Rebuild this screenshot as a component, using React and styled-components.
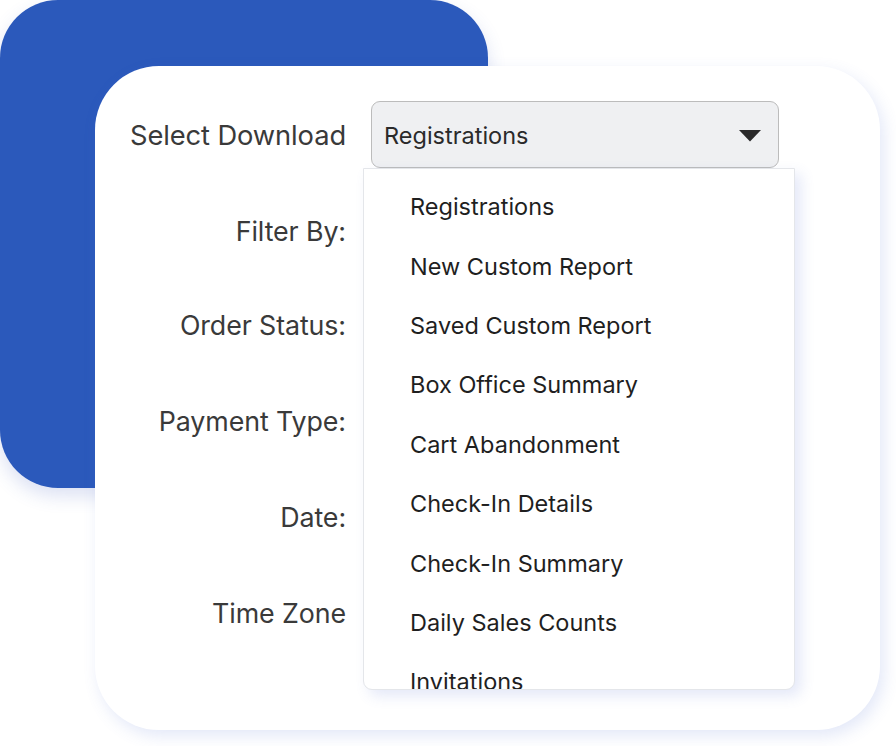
import React from "react";
import styled, { createGlobalStyle } from "styled-components";

const Global = createGlobalStyle`
  html, body { margin: 0; padding: 0; background: #ffffff; }
  body { font-family: "Inter", "Open Sans", sans-serif; }
  * { box-sizing: border-box; }
`;

const Stage = styled.div`
  display: grid;
  grid-template-areas: "stack";
  width: 896px;
  height: 746px;
  overflow: hidden;
`;

const BlueBlock = styled.div`
  grid-area: stack;
  width: 488px;
  height: 488px;
  background: #2b59bb;
  border-radius: 58px;
  box-shadow: 0 8px 18px rgba(60, 90, 190, 0.18);
`;

const Card = styled.div`
  grid-area: stack;
  margin: 66px 0 0 95px;
  width: 785px;
  height: 664px;
  background: #ffffff;
  border-radius: 64px;
  box-shadow: 4px 6px 16px rgba(80, 110, 210, 0.16);
  padding-top: 35px;
  display: flex;
  flex-direction: column;
`;

const Row = styled.div`
  display: grid;
  grid-template-columns: 251px 408px;
  column-gap: 25px;
  align-items: center;
`;

const LabelList = styled.div`
  display: flex;
  flex-direction: column;
  width: 251px;
  padding-top: 16px;
`;

const Label = styled.div`
  height: ${(p) => (p.$h ? p.$h : "96px")};
  display: flex;
  align-items: center;
  justify-content: flex-end;
  font-size: ${(p) => (p.$big ? "27.3px" : "26.8px")};
  color: #3a3a3a;
  letter-spacing: -0.1px;
  padding-top: 2px;
  white-space: nowrap;
`;

const SelectWrap = styled.div`
  position: relative;
  height: 67px;
  z-index: 2;
`;

const SelectBox = styled.div`
  height: 67px;
  display: flex;
  align-items: center;
  justify-content: space-between;
  padding: 2px 17px 0 12px;
  background: #eff0f2;
  border: 1.5px solid #bcbcbc;
  border-radius: 9px;
  font-size: 23.5px;
  color: #2a2a2a;
`;

const Caret = styled.svg`
  width: 22px;
  height: 12px;
  display: block;
`;

const Menu = styled.ul`
  position: absolute;
  top: 67px;
  left: -8px;
  width: 432px;
  height: 522px;
  margin: 0;
  padding: 8px 0 0 0;
  list-style: none;
  background: #ffffff;
  border: 1px solid #e4e6ea;
  border-radius: 0 0 9px 9px;
  box-shadow: 6px 6px 14px rgba(90, 115, 210, 0.16);
  overflow: hidden;
`;

const Item = styled.li`
  height: 59.4px;
  display: flex;
  align-items: center;
  padding-left: 46px;
  font-size: 23.5px;
  color: #1f1f1f;
  white-space: nowrap;
`;

const items = [
  "Registrations",
  "New Custom Report",
  "Saved Custom Report",
  "Box Office Summary",
  "Cart Abandonment",
  "Check-In Details",
  "Check-In Summary",
  "Daily Sales Counts",
  "Invitations",
];

const labels = ["Filter By:", "Order Status:", "Payment Type:", "Date:", "Time Zone"];

export default function App() {
  return (
    <>
      <Global />
      <Stage>
        <BlueBlock />
        <Card>
          <Row>
            <Label $h="67px" $big>Select Download</Label>
            <SelectWrap>
              <SelectBox>
                <span>Registrations</span>
                <Caret viewBox="0 0 22 12">
                  <path d="M0 0 H22 L11 11.5 Z" fill="#2a2a2a" />
                </Caret>
              </SelectBox>
              <Menu>
                {items.map((t) => (
                  <Item key={t}>{t}</Item>
                ))}
              </Menu>
            </SelectWrap>
          </Row>
          <LabelList>
            {labels.map((l, i) => (
              <Label key={l} $h={i === 0 ? "92px" : undefined}>
                {l}
              </Label>
            ))}
          </LabelList>
        </Card>
      </Stage>
    </>
  );
}
